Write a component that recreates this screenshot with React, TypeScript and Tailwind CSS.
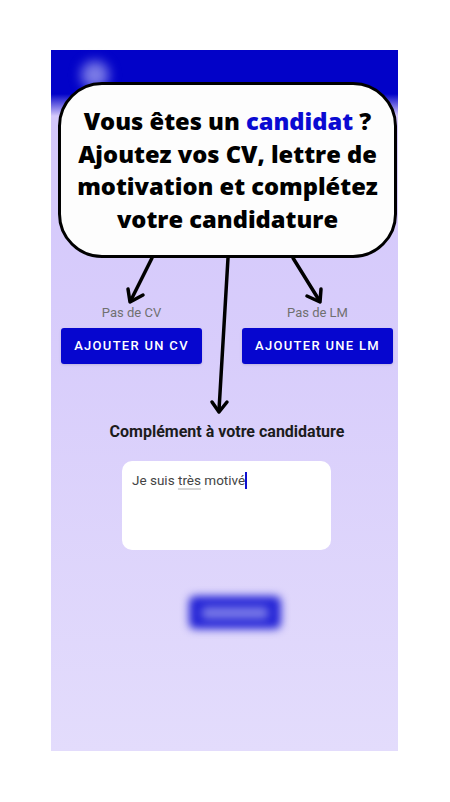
import React from 'react';

const Arrows = () => (
  <svg className="absolute left-0 top-0 pointer-events-none" width={450} height={802} viewBox="0 0 450 802">
    <g stroke="#000" strokeWidth={3.5} fill="none" strokeLinecap="round" strokeLinejoin="round">
      {/* gauche : vers le CV */}
      <path d="M152 258 L131 300" />
      <path d="M128 289 L130 302 L143 295" />
      {/* milieu : vers le complément */}
      <path d="M228 258 L219 410" />
      <path d="M212 402 L219 412 L227 402" />
      {/* droite : vers la LM */}
      <path d="M293 258 L319 300" />
      <path d="M307 296 L320 302 L321 289" />
    </g>
  </svg>
);

const Bubble = () => (
  <div className="absolute left-[58px] top-[82px] w-[339px] h-[176px] rounded-[44px] border-[3px] border-black bg-[#fdfdfd] flex flex-col items-center justify-center font-['Open_Sans',sans-serif] font-extrabold text-[23.7px] leading-[32.5px] text-black text-center">
    <p>
      Vous êtes un <span className="text-[#0a0ad2]">candidat</span> ?
    </p>
    <p>Ajoutez vos CV, lettre de</p>
    <p>motivation et complétez</p>
    <p>votre candidature</p>
  </div>
);

const Phone = () => (
  <div className="ml-[51px] mt-[50px] w-[347px] h-[701px] flex flex-col font-['Roboto',sans-serif] bg-[linear-gradient(to_bottom,#0202c8_0px,#0202c8_44px,#d4c8fb_66px,#d8cdfb_300px,#e3dcfc_100%)]">
    <div className="h-[50px] flex items-center pl-[30px]">
      <div className="w-7 h-7 rounded-full bg-[#7a7ae6] blur-[6px]" />
    </div>

    <div className="mt-[205px] flex pl-[10px] gap-[40px]">
      <div className="flex flex-col items-center w-[141px]">
        <span className="text-[13px] text-[#707070] leading-[16px]">Pas de CV</span>
        <button className="mt-[7px] w-[141px] h-[36px] rounded-[3px] bg-[#0606cf] text-white text-[13px] font-medium tracking-[1.3px] shadow-sm">
          AJOUTER UN CV
        </button>
      </div>
      <div className="flex flex-col items-center w-[151px]">
        <span className="text-[13px] text-[#707070] leading-[16px]">Pas de LM</span>
        <button className="mt-[7px] w-[151px] h-[36px] rounded-[3px] bg-[#0606cf] text-white text-[13px] font-medium tracking-[1.3px] shadow-sm">
          AJOUTER UNE LM
        </button>
      </div>
    </div>

    <h2 className="mt-[58px] text-center pl-[5px] text-[16px] font-bold text-[#1c1c1c] leading-[20px]">
      Complément à votre candidature
    </h2>

    <div className="mt-[19px] ml-[71px] w-[209px] h-[89px] rounded-[10px] bg-white px-[10px] pt-[10px]">
      <p className="text-[13.5px] text-[#444] leading-[18px]">
        Je suis <span className="underline decoration-[#d6d6d6] decoration-2 underline-offset-[3px]">très</span> motivé
        <span className="inline-block w-[2px] h-[17px] bg-[#1010d0] align-[-4px]" />
      </p>
    </div>

    <div className="mt-[46px] ml-[138px] w-[92px] h-[33px] rounded-[6px] bg-[#2424d6] blur-[4px] flex items-center justify-center">
      <div className="w-[66px] h-[12px] rounded bg-[#7a7ae8]" />
    </div>
  </div>
);

export default function App() {
  return (
    <div className="relative w-[450px] h-[802px] bg-white overflow-hidden">
      <Phone />
      <Bubble />
      <Arrows />
    </div>
  );
}
